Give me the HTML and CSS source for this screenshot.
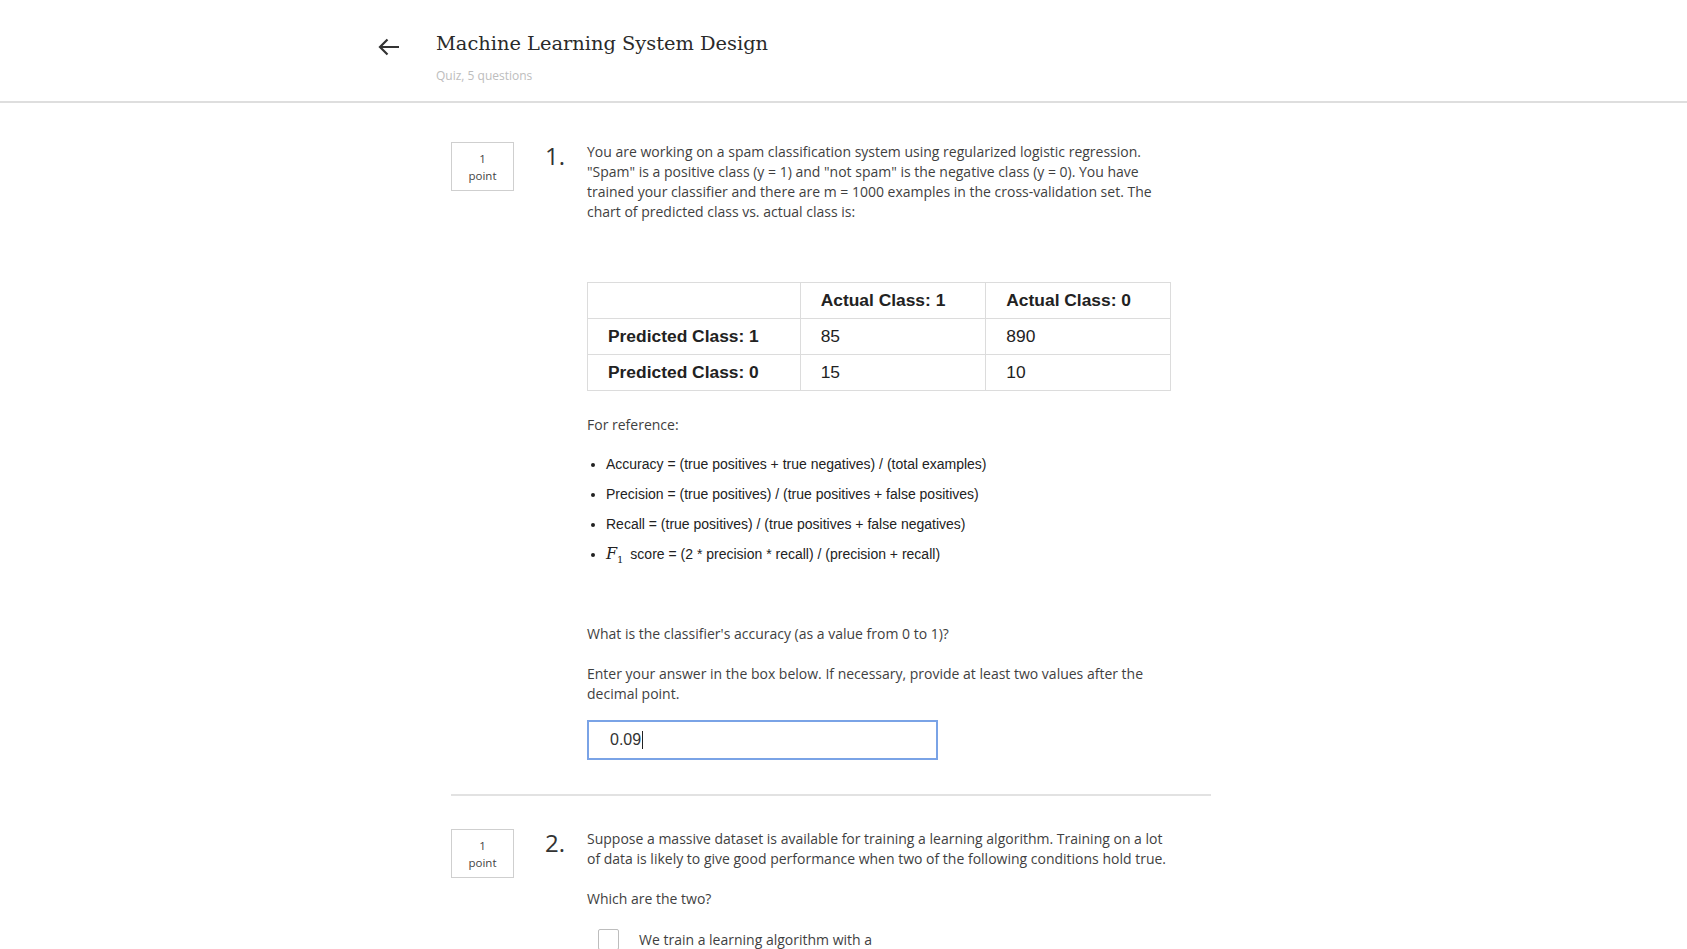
FILE: index.html
```html
<!DOCTYPE html>
<html lang="en">
<head>
<meta charset="utf-8">
<title>Machine Learning System Design</title>
<link rel="stylesheet" href="styles.css">
</head>
<body>
<header class="topbar">
  <div class="topbar-inner">
    <a class="back" href="#" aria-label="Back">
      <svg width="24" height="24" viewBox="0 0 24 24"><path d="M22 12H3M10.5 4.5L3 12l7.5 7.5" fill="none" stroke="#333" stroke-width="2.2" stroke-linecap="butt" stroke-linejoin="miter"/></svg>
    </a>
    <div class="titles">
      <h1 class="title">Machine Learning System Design</h1>
      <div class="subtitle">Quiz, 5 questions</div>
    </div>
  </div>
</header>

<main class="content">
  <section class="question">
    <div class="points">1<br>point</div>
    <div class="qnum">1.</div>
    <div class="qbody">
      <p class="text">You are working on a spam classification system using regularized logistic regression. "Spam" is a positive class (y = 1) and "not spam" is the negative class (y = 0). You have trained your classifier and there are m = 1000 examples in the cross-validation set. The chart of predicted class vs. actual class is:</p>
      <table class="chart">
        <tr><th class="c1"></th><th class="c2">Actual Class: 1</th><th class="c3">Actual Class: 0</th></tr>
        <tr><th>Predicted Class: 1</th><td>85</td><td>890</td></tr>
        <tr><th>Predicted Class: 0</th><td>15</td><td>10</td></tr>
      </table>
      <p class="text ref">For reference:</p>
      <ul class="formulas">
        <li>Accuracy = (true positives + true negatives) / (total examples)</li>
        <li>Precision = (true positives) / (true positives + false positives)</li>
        <li>Recall = (true positives) / (true positives + false negatives)</li>
        <li><span class="math"><i>F</i><sub>1</sub></span> score = (2 * precision * recall) / (precision + recall)</li>
      </ul>
      <p class="text ask">What is the classifier's accuracy (as a value from 0 to 1)?</p>
      <p class="text enter">Enter your answer in the box below. If necessary, provide at least two values after the decimal point.</p>
      <div class="answer">0.09<span class="caret"></span></div>
    </div>
  </section>

  <hr class="divider">

  <section class="question">
    <div class="points">1<br>point</div>
    <div class="qnum">2.</div>
    <div class="qbody">
      <p class="text">Suppose a massive dataset is available for training a learning algorithm. Training on a lot of data is likely to give good performance when two of the following conditions hold true.</p>
      <p class="text which">Which are the two?</p>
      <label class="option"><span class="box"></span><span class="opt-text">We train a learning algorithm with a</span></label>
    </div>
  </section>
</main>
</body>
</html>
```

FILE: styles.css
```css
html, body {
  margin: 0;
  padding: 0;
  background: #fff;
  overflow: hidden;
}
body {
  font-family: "Open Sans", "Liberation Sans", sans-serif;
  color: #3c3c3c;
  height: 949px;
}
.topbar {
  height: 101px;
  border-bottom: 2px solid #dedede;
}
.topbar-inner {
  margin-left: 377px;
  display: flex;
  align-items: flex-start;
}
.back {
  display: block;
  width: 24px;
  height: 24px;
  margin-top: 35px;
}
.back svg { display: block; }
.titles {
  margin-left: 35px;
  padding-top: 31px;
}
.title {
  margin: 0;
  font-family: "DejaVu Serif", "Liberation Serif", serif;
  font-weight: normal;
  font-size: 19.4px;
  line-height: 26px;
  color: #2a2a2a;
}
.subtitle {
  margin-top: 11px;
  font-size: 12px;
  line-height: 16px;
  color: #bdbdbd;
}
.content {
  margin-left: 451px;
  width: 760px;
  padding-top: 39px;
}
.question {
  display: flex;
  align-items: flex-start;
}
.points {
  width: 61px;
  height: 47px;
  border: 1px solid #cfcfcf;
  box-sizing: content-box;
  text-align: center;
  font-size: 11.5px;
  line-height: 17px;
  display: flex;
  flex-direction: column;
  justify-content: center;
  color: #444;
}
.qnum {
  margin-left: 31px;
  width: 42px;
  font-size: 24px;
  line-height: 28px;
  color: #333;
}
.qbody {
  flex: 1;
  padding-right: 40px;
}
.text {
  margin: 0;
  font-size: 14px;
  line-height: 20px;
  color: #3f3f3f;
}
.chart {
  margin-top: 60px;
  border-collapse: collapse;
  font-family: "Liberation Sans", Arial, sans-serif;
  font-size: 17.4px;
  color: #222;
}
.chart th, .chart td {
  border: 1px solid #dcdcdc;
  height: 36px;
  padding: 0 0 0 20px;
  text-align: left;
  box-sizing: border-box;
}
.chart th { font-weight: bold; }
.chart .c1 { width: 213px; }
.chart .c2 { width: 186px; }
.chart .c3 { width: 185px; }
.ref { margin-top: 24px; }
.formulas {
  margin: 19px 0 0 0;
  padding-left: 19px;
  font-family: "Liberation Sans", Arial, sans-serif;
  font-size: 14px;
  line-height: 20px;
  color: #222;
}
.formulas li { margin-bottom: 10px; }
.formulas li:last-child { margin-bottom: 0; }
.math {
  font-family: "DejaVu Serif", "Liberation Serif", serif;
  font-size: 16px;
  margin-right: 3px;
}
.math sub { font-size: 10px; font-style: normal; }
.ask { margin-top: 54px; }
.enter { margin-top: 20px; }
.answer {
  margin-top: 16px;
  width: 351px;
  height: 40px;
  box-sizing: border-box;
  border: 2px solid #7aa3e6;
  padding-left: 21px;
  display: flex;
  align-items: center;
  font-family: "Liberation Sans", Arial, sans-serif;
  font-size: 16px;
  color: #333;
}
.caret {
  display: inline-block;
  width: 1px;
  height: 18px;
  background: #222;
  margin-left: 1px;
}
.divider {
  margin: 34px 0 33px 0;
  border: 0;
  border-top: 2px solid #e2e2e2;
  height: 0;
}
.which { margin-top: 20px; }
.option {
  display: flex;
  align-items: center;
  margin-top: 20px;
  margin-left: 11px;
}
.box {
  width: 21px;
  height: 21px;
  border: 1px solid #bdbdbd;
  border-radius: 2px;
  box-sizing: border-box;
}
.opt-text {
  margin-left: 20px;
  font-size: 14px;
  line-height: 20px;
  color: #3f3f3f;
}
```
